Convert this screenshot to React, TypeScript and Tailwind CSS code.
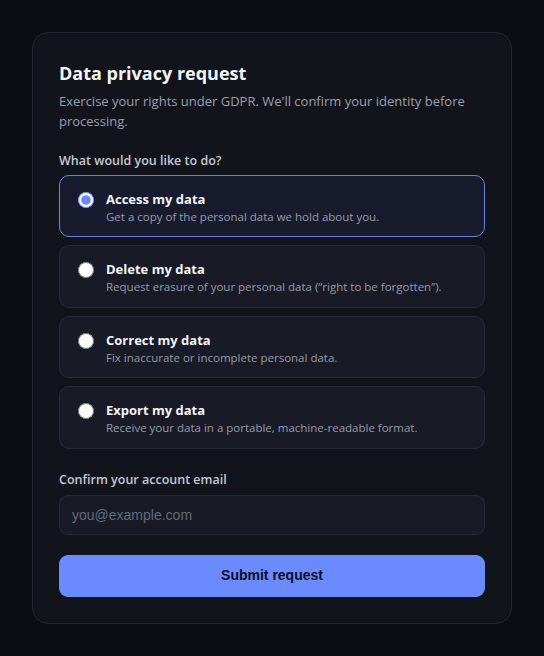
import { useState } from "react";

const options = [
  { id: "access", title: "Access my data", desc: "Get a copy of the personal data we hold about you." },
  { id: "delete", title: "Delete my data", desc: "Request erasure of your personal data (\u201cright to be forgotten\u201d)." },
  { id: "correct", title: "Correct my data", desc: "Fix inaccurate or incomplete personal data." },
  { id: "export", title: "Export my data", desc: "Receive your data in a portable, machine-readable format." },
];

export default function App() {
  const [choice, setChoice] = useState("access");

  return (
    <div className="min-h-screen bg-[#0c0d12] p-8 font-['Open_Sans','Noto_Sans',sans-serif]">
      <div className="w-[480px] rounded-2xl border border-[#23252f] bg-[#12141c] px-[26px] pt-[26px] pb-[26px]">
        <h1 className="text-[18px] font-bold leading-7 text-[#f3f4f8]">Data privacy request</h1>
        <p className="mt-1 text-[13px] leading-5 text-[#9a9fae]">
          Exercise your rights under GDPR. We'll confirm your identity before processing.
        </p>

        <p className="mt-[21px] text-[12.5px] font-semibold text-[#c4c8d4]">What would you like to do?</p>
        <div className="mt-[4px] flex flex-col gap-[8px]">
          {options.map((o) => {
            const active = choice === o.id;
            return (
              <label
                key={o.id}
                className={
                  "flex h-[62.5px] cursor-pointer items-start gap-[12px] rounded-[10px] border px-[18px] pt-[14px] " +
                  (active ? "border-[#6b80e0] bg-[#181b2d]" : "border-[#262834] bg-[#181a25]")
                }
              >
                <input
                  type="radio"
                  name="req"
                  checked={active}
                  onChange={() => setChoice(o.id)}
                  className="mt-[2px] h-4 w-4 shrink-0 accent-[#6b8afd]"
                />
                <span className="flex flex-col">
                  <span className="text-[13px] font-bold leading-[18px] text-[#f3f4f8]">{o.title}</span>
                  <span className="text-[11.5px] leading-[18px] text-[#969bab]">{o.desc}</span>
                </span>
              </label>
            );
          })}
        </div>

        <label className="mt-[22px] block text-[12.5px] font-semibold text-[#c4c8d4]">Confirm your account email</label>
        <input
          type="email"
          placeholder="you@example.com"
          className="mt-[5px] block h-[40px] w-full rounded-[9px] border border-[#262834] bg-[#181a25] px-3 font-['Liberation_Sans',Arial,sans-serif] text-[14px] text-[#e5e7ee] outline-none placeholder:text-[#646a7a]"
        />

        <button className="mt-[20px] h-[42px] w-full rounded-[9px] bg-[#6b8afd] font-['Liberation_Sans',Arial,sans-serif] text-[14px] font-bold text-[#0d1020]">
          Submit request
        </button>
      </div>
    </div>
  );
}
